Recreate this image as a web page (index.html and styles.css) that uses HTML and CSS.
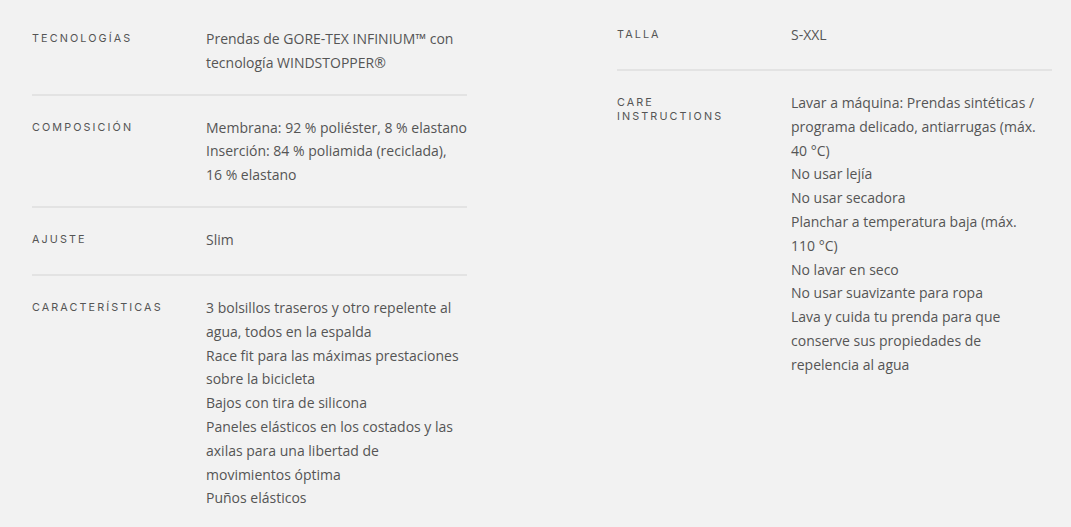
FILE: index.html
```
<!DOCTYPE html>
<html lang="es">
<head>
    <meta charset="UTF-8">
    <meta name="viewport" content="width=device-width, initial-scale=1.0">
    <title>Especificaciones</title>
    <link rel="stylesheet" href="styles.css">
</head>
<body>
    <div class="specs">
        <div class="spec-col spec-col-left">
            <div class="spec-row">
                <div class="spec-label">Tecnologías</div>
                <div class="spec-value">Prendas de GORE-TEX INFINIUM™ con tecnología WINDSTOPPER®</div>
            </div>
            <div class="spec-row">
                <div class="spec-label">Composición</div>
                <div class="spec-value">Membrana: 92&nbsp;% poliéster, 8&nbsp;% elastano<br>Inserción: 84&nbsp;% poliamida (reciclada), 16&nbsp;% elastano</div>
            </div>
            <div class="spec-row">
                <div class="spec-label">Ajuste</div>
                <div class="spec-value">Slim</div>
            </div>
            <div class="spec-row">
                <div class="spec-label">Características</div>
                <div class="spec-value">3 bolsillos traseros y otro repelente al agua, todos en la espalda<br>Race fit para las máximas prestaciones sobre la bicicleta<br>Bajos con tira de silicona<br>Paneles elásticos en los costados y las axilas para una libertad de movimientos óptima<br>Puños elásticos</div>
            </div>
        </div>
        <div class="spec-col">
            <div class="spec-row">
                <div class="spec-label">Talla</div>
                <div class="spec-value">S-XXL</div>
            </div>
            <div class="spec-row">
                <div class="spec-label">Care instructions</div>
                <div class="spec-value">Lavar a máquina: Prendas sintéticas / programa delicado, antiarrugas (máx. 40&nbsp;°C)<br>No usar lejía<br>No usar secadora<br>Planchar a temperatura baja (máx. 110&nbsp;°C)<br>No lavar en seco<br>No usar suavizante para ropa<br>Lava y cuida tu prenda para que conserve sus propiedades de repelencia al agua</div>
            </div>
        </div>
    </div>
</body>
</html>
```

FILE: styles.css
```
body {
    margin: 0;
    background-color: #f2f2f2;
    font-family: "Open Sans", Arial, sans-serif;
    color: #555;
}
.specs {
    display: grid;
    grid-template-columns: 435px 435px;
    column-gap: 150px;
    align-items: start;
    padding: 3px 0 0 32px;
}
.spec-col-left {
    padding-top: 4px;
}
.spec-row {
    display: flex;
    padding: 20px 0 19px;
    border-bottom: 2px solid #e3e3e3;
}
.spec-row:last-child {
    border-bottom: none;
}
.spec-label {
    flex: 0 0 140px;
    margin-right: 34px;
    padding: 5px 0 8px;
    font-family: Inter, "Noto Sans", sans-serif;
    font-size: 10.8px;
    line-height: 14px;
    letter-spacing: 2.1px;
    text-transform: uppercase;
    color: #555;
}
.spec-value {
    flex: 1;
    font-size: 14px;
    line-height: 1.7;
}
```
